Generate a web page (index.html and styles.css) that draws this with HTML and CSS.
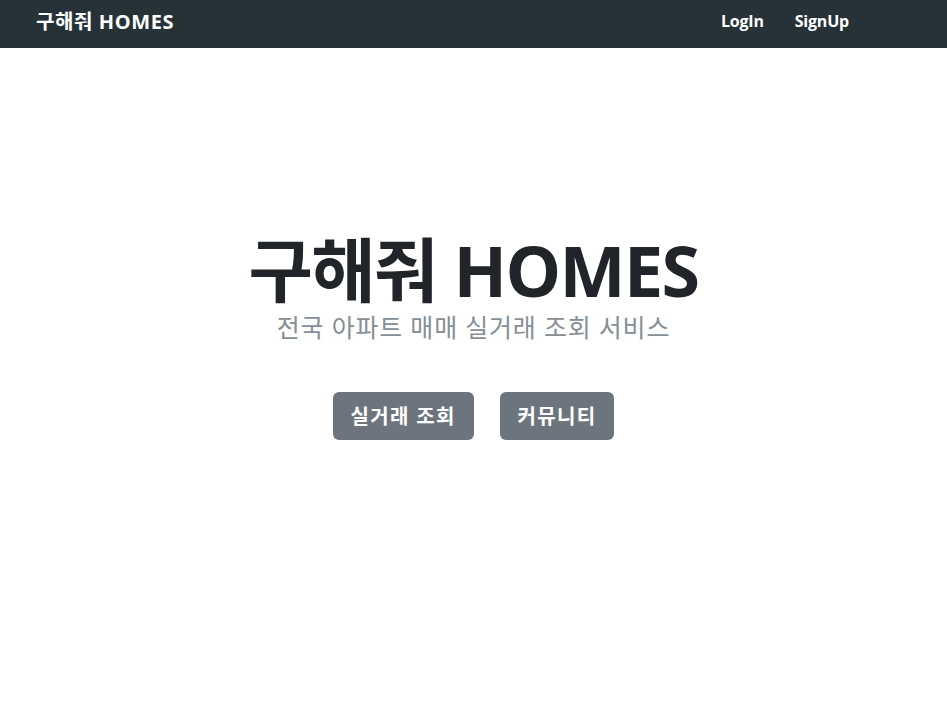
FILE: index.html
```html
<!DOCTYPE html>
<html lang="ko">
<head>
<meta charset="utf-8">
<title>구해줘 HOMES</title>
<link rel="stylesheet" href="styles.css">
</head>
<body>
<nav class="navbar">
  <a class="brand" href="#">구해줘 HOMES</a>
  <div class="nav-links">
    <a class="nav-link" href="#">LogIn</a>
    <a class="nav-link" href="#">SignUp</a>
  </div>
</nav>
<main class="hero">
  <h1 class="hero-title">구해줘 HOMES</h1>
  <p class="hero-sub">전국 아파트 매매 실거래 조회 서비스</p>
  <div class="hero-actions">
    <a class="btn" href="#">실거래 조회</a>
    <a class="btn" href="#">커뮤니티</a>
  </div>
</main>
</body>
</html>
```
FILE: styles.css
```css
* { box-sizing: border-box; }
html, body { margin: 0; padding: 0; }
body {
  font-family: "Open Sans", "Noto Sans CJK KR", sans-serif;
  background: #fff;
  color: #212529;
}
a { text-decoration: none; }
.navbar {
  height: 48px;
  background: #263238;
  display: flex;
  align-items: center;
  justify-content: space-between;
  padding: 0 98px 0 36px;
}
.brand {
  color: #fff;
  font-weight: 700;
  font-size: 20px;
  letter-spacing: 0.6px;
  margin-top: -7px;
}
.nav-links {
  display: flex;
  gap: 31px;
  margin-top: -7px;
}
.nav-link {
  color: #fff;
  font-weight: 700;
  font-size: 16px;
  letter-spacing: -0.2px;
}
.hero {
  display: flex;
  flex-direction: column;
  align-items: center;
  padding-top: 187px;
}
.hero-title {
  margin: 0;
  font-size: 70px;
  font-weight: 700;
  line-height: 1;
  color: #212529;
  letter-spacing: -1.6px;
}
.hero-sub {
  margin: 6px 0 0;
  font-size: 25px;
  line-height: 1.3;
  color: #868e96;
  letter-spacing: 0.8px;
}
.hero-actions {
  display: flex;
  gap: 26px;
  margin-top: 48px;
}
.btn {
  display: inline-flex;
  align-items: center;
  height: 48px;
  padding: 0 18px;
  border-radius: 6px;
  background: #6c757d;
  color: #fff;
  font-weight: 700;
  font-size: 20px;
  letter-spacing: 1.3px;
}
```
